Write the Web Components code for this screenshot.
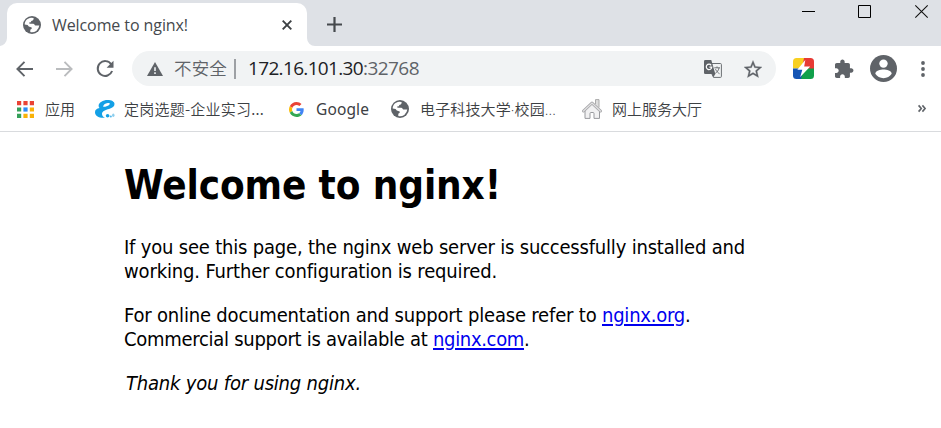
<!DOCTYPE html>
<html lang="zh-CN">
<head>
<meta charset="utf-8">
<title>Welcome to nginx!</title>
<style>
html,body{margin:0;height:100%;background:#fff;overflow:hidden}
</style>
</head>
<body>
<browser-window>
  <tab-strip slot="tabs"></tab-strip>
  <tool-bar slot="tools"></tool-bar>
  <bookmark-bar slot="bookmarks"></bookmark-bar>
  <nginx-page></nginx-page>
</browser-window>
<script>
const define = (name, html, after) => customElements.define(name, class extends HTMLElement {
  connectedCallback() {
    if (this.shadowRoot) return;
    this.attachShadow({ mode: 'open' }).innerHTML = html;
    if (after) after(this);
  }
});

/* A single line of text tracked so that its advance equals the "w" attribute. */
define('fit-text', `<style>:host{display:inline-block;white-space:pre;flex:none}:host([link]) span{text-decoration:underline;text-decoration-thickness:2px;text-underline-offset:2px}</style><span><slot></slot></span>`, el => {
  const n = el.textContent.length, span = el.shadowRoot.querySelector('span');
  const w = +el.getAttribute('w');
  span.style.letterSpacing = ((w - span.getBoundingClientRect().width) / n) + 'px';
  el.style.width = w + 'px';
});

const icons = {
  globe: `<svg viewBox="0 0 18 18"><circle cx="9" cy="9" r="9" fill="#5f6368"/><path d="M1.700 8.600C1.700 4.800 4.600 1.900 8.200 1.700L10.600 2.100C10.700 3.500 10.300 4.300 9.200 4.700L8.100 5V6.200H6.400V7.700H10.200C11.500 7.800 11.500 9.300 12.400 9.600H16.300A7.400 7.400 0 0 1 7.300 16.100V13.700L8.700 12.800V11.400L5.800 10.500 4.600 9.100 1.700 8.600Z" fill="#fff"/></svg>`,
  close: `<svg viewBox="0 0 10 10"><path d="M.7.7 9.300 9.300M9.300.7.7 9.300" stroke="#3c4043" stroke-width="1.900" fill="none"/></svg>`,
  plus: `<svg viewBox="0 0 15 15"><path d="M7.500 0V15M0 7.500H15" stroke="#45494d" stroke-width="2.200"/></svg>`,
  min: `<svg viewBox="0 0 13 13"><path d="M0 6.500H13" stroke="#000"/></svg>`,
  max: `<svg viewBox="0 0 13 13"><path d="M.5.5H12.500V12.500H.5Z" fill="none" stroke="#000"/></svg>`,
  x: `<svg viewBox="0 0 13 13"><path d="M.3.3 12.700 12.700M12.700.3.3 12.700" stroke="#111" stroke-width="1.100"/></svg>`,
  back: `<svg viewBox="0 0 17 16"><path d="M17 8H1.500M8.500.8 1.400 8 8.500 15.200" fill="none" stroke="currentColor" stroke-width="1.900"/></svg>`,
  reload: `<svg viewBox="0 0 18 18"><path d="M15.300 4.400A7.400 7.400 0 1 0 16.100 11" fill="none" stroke="#5f6368" stroke-width="2"/><path d="M17.500.8V7.700H10.600Z" fill="#5f6368"/></svg>`,
  warn: `<svg viewBox="0 0 16 14"><path d="M8 0 16 14H0Z" fill="#5f6368"/><path d="M7.200 5.200H8.800V9H7.200ZM7.200 10.300H8.800V12H7.200Z" fill="#f1f3f4"/></svg>`,
  translate: `<svg viewBox="0 0 18 18"><path d="M8 3.500H16.400Q17.400 3.500 17.400 4.500V16.500Q17.400 17.400 16.400 17.400H9.500L7 12" fill="#f1f3f4" stroke="#6b6f73"/><path d="M1.300 0H7.300L11.300 14H1.300Q0 14 0 12.700V1.300Q0 0 1.300 0Z" fill="#5f6368"/><path d="M8 14H11.300L9.400 17.300Z" fill="#5f6368"/><path d="M7.200 5.300A2.700 2.700 0 1 0 7.700 7.200H5.400" fill="none" stroke="#fff" stroke-width="1.200"/><path d="M10.300 7.800H16M13 6.500V7.800M15 8C14.500 10.500 12.800 12.500 11.300 13.300M11.500 9.200C12.500 11.200 14 12.800 15.500 13.700" fill="none" stroke="#6b6f73"/></svg>`,
  star: `<svg viewBox="2 2 20 19"><path d="M22 9.240l-7.190-.620L12 2 9.190 8.630 2 9.240l5.460 4.730L5.820 21 12 17.270 18.180 21l-1.630-7.030L22 9.240zM12 15.400l-3.760 2.270 1-4.280-3.320-2.880 4.380-.380L12 6.100l1.710 4.040 4.380.380-3.320 2.880 1 4.280L12 15.400z" fill="#5f6368" stroke="#5f6368" stroke-width=".3"/></svg>`,
  bolt: `<svg viewBox="0 0 21 21"><defs><clipPath id="c"><rect width="21" height="21" rx="3.500"/></clipPath></defs><g clip-path="url(#c)"><path d="M0 0H12L8 10.500H0Z" fill="#f8d021"/><path d="M11 0H21V11H9Z" fill="#e73a35"/><path d="M0 10.500H12L9 21H0Z" fill="#1555b5"/><path d="M11 10.500H21V21H8Z" fill="#10a04b"/><path d="M12.300 2 4.300 11.800H9.300L7.200 19 17.200 8.600H11.200Z" fill="#fff"/></g></svg>`,
  puzzle: `<svg viewBox="2 1.500 20.500 20.500"><path d="M20.500 11H19V7c0-1.100-.9-2-2-2h-4V3.500C13 2.120 11.880 1 10.500 1S8 2.120 8 3.500V5H4c-1.100 0-1.990.9-1.990 2v3.800H3.500c1.490 0 2.700 1.210 2.700 2.700s-1.210 2.700-2.700 2.700H2V20c0 1.100.9 2 2 2h3.800v-1.500c0-1.490 1.210-2.700 2.700-2.700s2.700 1.210 2.700 2.700V22H17c1.100 0 2-.9 2-2v-4h1.500c1.380 0 2.500-1.120 2.500-2.500S21.880 11 20.500 11z" fill="#5f6368"/></svg>`,
  avatar: `<svg viewBox="0 0 27 27"><circle cx="13.500" cy="13.500" r="13.500" fill="#5f6368"/><circle cx="13.500" cy="8.600" r="4.200" fill="#fff"/><path d="M5.300 18.800C5.300 15.700 10.500 14.500 13.500 14.500S21.700 15.700 21.700 18.800C20 21.500 17 23.200 13.500 23.200S7 21.500 5.300 18.800Z" fill="#fff"/></svg>`,
  dots: `<svg viewBox="0 0 4 16"><g fill="#5f6368"><circle cx="2" cy="2" r="1.900"/><circle cx="2" cy="8" r="1.900"/><circle cx="2" cy="14" r="1.900"/></g></svg>`,
  apps: `<svg viewBox="0 0 17 17"><path d="M0 0h4.200v4.200H0zM6.400 0h4.200v4.200H6.400zM12.800 0H17v4.200h-4.200z" fill="#ea4335"/><path d="M0 6.400h4.200v4.200H0zM0 12.800h4.200V17H0z" fill="#34a059"/><path d="M6.400 6.400h4.200v4.200H6.400z" fill="#2b8af7"/><path d="M12.800 6.400H17v4.200h-4.200zM12.800 12.800H17V17h-4.200zM6.400 12.800h4.200V17H6.400z" fill="#f9b208"/></svg>`,
  swoosh: `<svg viewBox="0 0 20 18"><path d="M19.500 4C19.500 1.500 16.500 0 12.500 0 8 0 3.700 2.500 3.600 5.700 3.600 6.800 4 7.500 4.600 8.100 1.700 8.500 0 10 0 12.200 0 15.800 3.800 18.300 10 17.800 7.800 16.800 6.900 15.200 7 13.500 7.300 11 10.500 9.800 14 8.900 17.500 8 19.500 6.500 19.500 4ZM14.800 3.900C14 5.700 11 6.700 8.100 6.800 8.200 4.800 10 3.200 12.800 2.900 14.200 2.800 15 3.200 14.800 3.900Z" fill="#14a0e6"/><circle cx="12.600" cy="15.800" r="1.800" fill="#14a0e6"/><circle cx="15.800" cy="16.500" r="1.100" fill="#57b9eb"/><ellipse cx="18.300" cy="15.300" rx="1.200" ry="1.800" fill="#8dceed"/></svg>`,
  google: `<svg viewBox="0 0 48 48"><path fill="#EA4335" d="M24 9.500c3.540 0 6.710 1.220 9.210 3.600l6.850-6.850C35.900 2.380 30.470 0 24 0 14.620 0 6.510 5.380 2.560 13.220l7.980 6.190C12.430 13.720 17.740 9.500 24 9.500z"/><path fill="#4285F4" d="M46.980 24.550c0-1.570-.15-3.090-.38-4.550H24v9.020h12.940c-.58 2.960-2.260 5.480-4.780 7.180l7.730 6c4.510-4.180 7.090-10.360 7.090-17.650z"/><path fill="#FBBC05" d="M10.530 28.590c-.48-1.450-.76-2.990-.76-4.590s.27-3.140.76-4.590l-7.980-6.190C.92 16.460 0 20.120 0 24c0 3.880.92 7.540 2.560 10.780l7.970-6.190z"/><path fill="#34A853" d="M24 48c6.480 0 11.930-2.130 15.890-5.810l-7.730-6c-2.150 1.450-4.920 2.300-8.160 2.300-6.260 0-11.570-4.220-13.470-9.910l-7.980 6.190C6.510 42.620 14.620 48 24 48z"/></svg>`,
  house: `<svg viewBox="0 0 20 20"><path d="M13.500 5V.6H17V8.500" fill="#ddd" stroke="#aaa"/><path d="M3 10.500V19.400H8V14.500Q8 13.500 9 13.500H11Q12 13.500 12 14.500V19.400H17.500V10.500L10 3.500Z" fill="#f1f1f2" stroke="#999a9e"/><path d="M1.500 12 10 4 18.500 12" fill="none" stroke="#a5a5a8" stroke-width="3" stroke-linecap="round" stroke-linejoin="round"/><path d="M1.500 12 10 4 18.500 12" fill="none" stroke="#e2e2e3" stroke-width="1.200" stroke-linecap="round"/></svg>`,
  more: `<svg viewBox="0 0 8 7"><path d="M.6.4 3.300 3.500.6 6.600M4.400.4 7.100 3.500 4.400 6.600" fill="none" stroke="#5f6368" stroke-width="1.600"/></svg>`,
  flare: `<svg viewBox="0 0 8 8"><path d="M8 0V8H0A8 8 0 0 0 8 0Z" fill="#fff"/></svg>`
};
define('ui-icon', `<style>:host{display:block;flex:none}svg{display:block;width:100%;height:100%;overflow:visible}</style>`, el => {
  const t = document.createElement('template');
  t.innerHTML = icons[el.getAttribute('name')];
  el.shadowRoot.append(t.content.cloneNode(true));
  const [w, h] = el.getAttribute('size').split(' ');
  el.style.width = w + 'px';
  el.style.height = (h || w) + 'px';
});

define('tab-strip', `<style>
:host{display:flex;height:46px;background:#dee1e6;font:16px/22px "Open Sans","Noto Sans",sans-serif;color:#45494d}
.flare{align-self:flex-end}
.flip{transform:scaleX(-1)}
.tab{box-sizing:border-box;width:300px;height:43px;margin-top:3px;border-radius:10px 10px 0 0;background:#fff;display:flex;align-items:center;padding:0 15px 0 16px}
.tab fit-text{margin-left:11px;flex:none}
.tab .c{margin-left:auto}
.plus{margin:17px 0 0 12px}
.win{margin-left:auto;display:flex;gap:43px;padding:5px 13px 0 0}
.win :nth-child(-n+2){margin-left:-1px;margin-right:1px}
</style>
<ui-icon class="flare" style="margin-left:-1px" name="flare" size="8"></ui-icon>
<div class="tab"><ui-icon name="globe" size="18"></ui-icon><fit-text w="136">Welcome to nginx!</fit-text><ui-icon class="c" name="close" size="10"></ui-icon></div>
<ui-icon class="flare flip" name="flare" size="8"></ui-icon>
<ui-icon class="plus" name="plus" size="15"></ui-icon>
<div class="win"><ui-icon name="min" size="13"></ui-icon><ui-icon name="max" size="13"></ui-icon><ui-icon name="x" size="13"></ui-icon></div>`);

define('tool-bar', `<style>
:host{display:flex;align-items:center;height:45px;box-sizing:border-box;padding-left:16px;color:#5f6368;font:19px/26px "Open Sans","Noto Sans","Noto Sans CJK SC",sans-serif}
.omni{box-sizing:border-box;width:644px;height:35px;border-radius:18px;background:#f1f3f4;margin-left:18px;display:flex;align-items:center;padding:0 14px 0 15px}
.sep{width:2px;height:20px;background:#9da0a4;margin:0 12px 0 7px}
.url{color:#202124}
fit-text{margin-top:-2px}
</style>
<ui-icon name="back" size="17 16"></ui-icon>
<ui-icon name="back" size="17 16" style="margin-left:23px;color:#babcbe;transform:scaleX(-1)"></ui-icon>
<ui-icon name="reload" size="18" style="margin-left:23px"></ui-icon>
<div class="omni">
<ui-icon name="warn" size="16 14"></ui-icon>
<fit-text w="53" style="margin-left:11px;font:350 17.500px/26px 'Noto Sans CJK SC',sans-serif">不安全</fit-text><span class="sep"></span>
<fit-text w="115" class="url">172.16.101.30</fit-text><fit-text w="56">:32768</fit-text>
<ui-icon name="translate" size="18" style="margin-left:auto"></ui-icon>
<ui-icon name="star" size="18" style="margin-left:22px"></ui-icon></div>
<ui-icon name="bolt" size="21" style="margin-left:17px"></ui-icon>
<ui-icon name="puzzle" size="18" style="margin-left:21px"></ui-icon>
<ui-icon name="avatar" size="27" style="margin-left:17px"></ui-icon>
<ui-icon name="dots" size="4 16" style="margin-left:24px"></ui-icon>`);

define('book-mark', `<style>
:host{display:flex;align-items:center}
</style><slot name="icon"></slot><slot></slot>`);

define('bookmark-bar', `<style>
:host{display:flex;align-items:center;height:41px;padding:0 15px 4px 17px;box-sizing:border-box;border-bottom:1px solid #d9dbde;color:#3c4043;font:15.500px/22px "Noto Sans","Noto Sans CJK SC",sans-serif}
.cjk{font:350 15px/22px "Noto Sans CJK SC",sans-serif}
</style>
<book-mark><ui-icon slot="icon" name="apps" size="17"></ui-icon><fit-text class="cjk" w="30" style="margin-left:11px">应用</fit-text></book-mark>
<book-mark style="margin-left:20px"><ui-icon slot="icon" name="swoosh" size="20 18"></ui-icon><fit-text class="cjk" w="140" style="margin-left:9px">定岗选题-企业实习...</fit-text></book-mark>
<book-mark style="margin-left:25px"><ui-icon slot="icon" name="google" size="15"></ui-icon><fit-text w="53" style="margin-left:12px">Google</fit-text></book-mark>
<book-mark style="margin-left:22px"><ui-icon slot="icon" name="globe" size="18"></ui-icon><fit-text class="cjk" w="136" style="margin-left:11px;font-family:'Open Sans','Noto Sans CJK SC',sans-serif">电子科技大学·校园...</fit-text></book-mark>
<book-mark style="margin-left:26px"><ui-icon slot="icon" name="house" size="20"></ui-icon><fit-text class="cjk" w="90" style="margin-left:10px">网上服务大厅</fit-text></book-mark>
<ui-icon name="more" size="8 7" style="margin-left:auto;margin-top:-2px"></ui-icon>`);

define('nginx-page', `<style>
:host{display:block;padding:29px 0 0 124px;color:#000;font:20px/24px "DejaVu Sans Condensed","DejaVu Sans",sans-serif;font-stretch:condensed}
h1{margin:0 0 26px;font-size:40px;line-height:48px;height:48px}
p{margin:0 0 20px;display:flex;flex-direction:column}
.row{display:flex;height:24px}
a{color:#00e}
em{padding-left:2px}
</style>
<h1><fit-text w="377">Welcome to nginx!</fit-text></h1>
<p><fit-text w="621">If you see this page, the nginx web server is successfully installed and</fit-text><fit-text w="373">working. Further configuration is required.</fit-text></p>
<p><span class="row"><fit-text w="478">For online documentation and support please refer to </fit-text><a><fit-text link w="83">nginx.org</fit-text></a><fit-text w="6">.</fit-text></span>
<span class="row"><fit-text w="309">Commercial support is available at </fit-text><a><fit-text link w="91">nginx.com</fit-text></a><fit-text w="6">.</fit-text></span></p>
<p><em><fit-text w="235">Thank you for using nginx.</fit-text></em></p>`);

define('browser-window', `<style>:host{display:flex;flex-direction:column;width:941px;height:428px;overflow:hidden;background:#fff}::slotted(*){flex:none}</style><slot name="tabs"></slot><slot name="tools"></slot><slot name="bookmarks"></slot><slot></slot>`);
</script>
</body>
</html>
